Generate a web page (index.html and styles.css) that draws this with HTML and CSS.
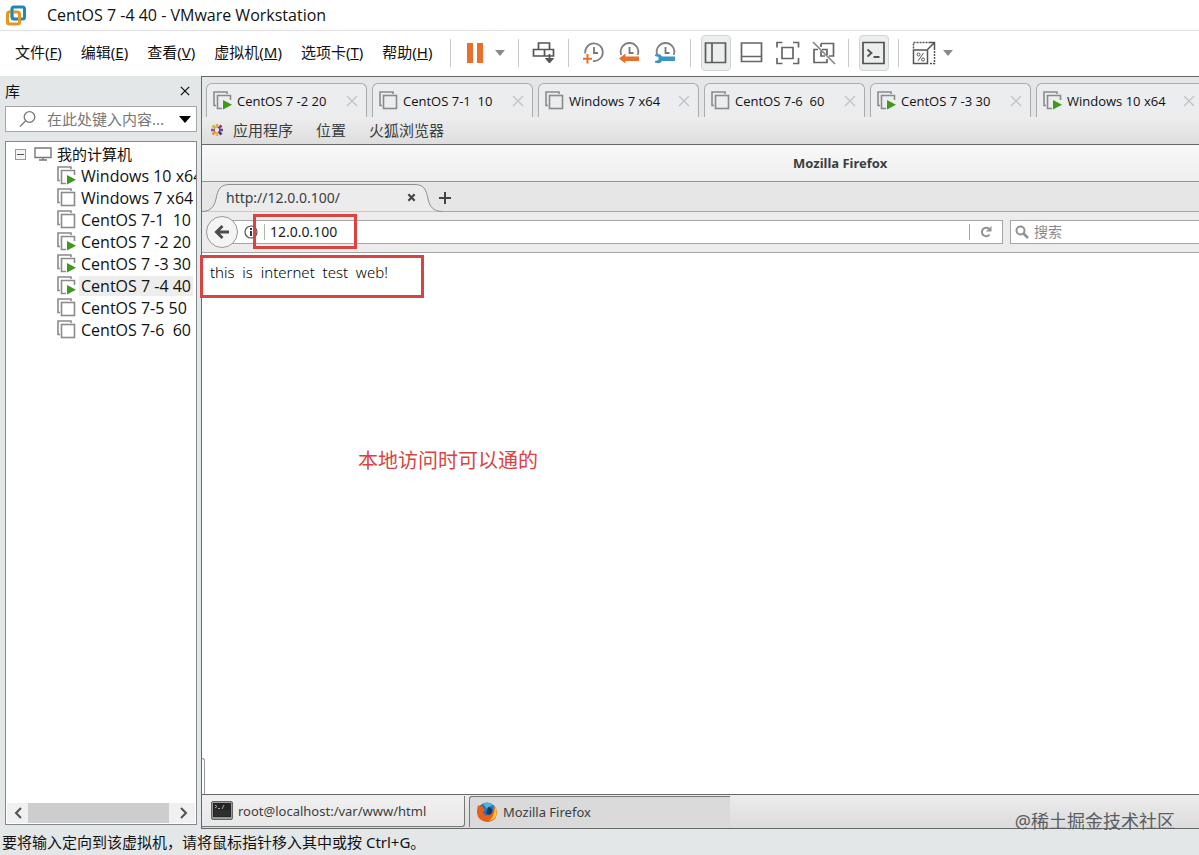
FILE: index.html
```html
<!DOCTYPE html>
<html lang="zh-CN">
<head>
<meta charset="utf-8">
<title>CentOS 7 -4 40 - VMware Workstation</title>
<link rel="stylesheet" href="styles.css">
</head>
<body>
<svg class="defs" aria-hidden="true">
  <symbol id="vm-off" viewBox="0 0 20 20">
    <path d="M3 14.5H1V1H14V3" fill="none" stroke="#8b8b8b" stroke-width="1.600"/>
    <rect x="4.500" y="4.500" width="13" height="13" fill="none" stroke="#8b8b8b" stroke-width="1.600"/>
  </symbol>
  <symbol id="vm-on" viewBox="0 0 20 20">
    <path d="M3 14.5H1V1H14V3" fill="none" stroke="#8b8b8b" stroke-width="1.600"/>
    <path d="M9 17.500H4.500V4.500H17.500V9" fill="none" stroke="#8b8b8b" stroke-width="1.600"/>
    <path d="M10 9L19 13.700L10 18.500Z" fill="#3f9a1c"/>
  </symbol>
  <symbol id="cross" viewBox="0 0 12 12">
    <path d="M1 1L11 11M11 1L1 11" fill="none" stroke="currentColor" stroke-width="1.500"/>
  </symbol>
  <symbol id="clock" viewBox="0 0 24 24">
    <path d="M3.300 12.500A8.800 8.800 0 1 1 11 20" fill="none" stroke="#808080" stroke-width="1.800"/>
    <path d="M12 6V12H16" fill="none" stroke="#777" stroke-width="1.800"/>
  </symbol>
  <symbol id="clock-top" viewBox="0 0 24 24">
    <path d="M3.300 14A8.800 8.800 0 1 1 19.700 14" fill="none" stroke="#808080" stroke-width="1.800"/>
    <path d="M11.500 6V12H15.500" fill="none" stroke="#777" stroke-width="1.800"/>
  </symbol>
</svg>

<header class="titlebar">
  <svg class="logo" viewBox="0 0 22 22" aria-hidden="true">
    <rect x="7" y="3" width="12.500" height="12" rx="2" fill="none" stroke="#1b8ab8" stroke-width="3"/>
    <rect x="2.500" y="8" width="12" height="12" rx="2" fill="none" stroke="#e6951f" stroke-width="3"/>
    <path d="M7 5V13Q7 15 9 15H12" fill="none" stroke="#1b8ab8" stroke-width="2.600"/>
  </svg>
  <h1 class="window-title">CentOS 7 -4 40 - VMware Workstation</h1>
</header>

<div class="menubar">
  <nav class="menus">
    <button class="menu" type="button">文件(<u>F</u>)</button>
    <button class="menu" type="button">编辑(<u>E</u>)</button>
    <button class="menu" type="button">查看(<u>V</u>)</button>
    <button class="menu" type="button">虚拟机(<u>M</u>)</button>
    <button class="menu" type="button">选项卡(<u>T</u>)</button>
    <button class="menu" type="button">帮助(<u>H</u>)</button>
  </nav>
  <div class="toolbar">
    <span class="sep"></span>
    <button class="tool" type="button" aria-label="挂起"><svg viewBox="0 0 24 24"><path d="M3 2h6v20H3zM13 2h6v20h-6z" fill="#e8702a"/></svg></button>
    <button class="caret" type="button" aria-label="电源选项"><svg viewBox="0 0 10 6"><path d="M0 0h10L5 6z" fill="#8a8a8a"/></svg></button>
    <span class="sep"></span>
    <button class="tool" type="button" aria-label="发送按键"><svg viewBox="0 0 24 24" fill="none" stroke="#555" stroke-width="1.700"><path d="M6.500 8.500V2H17.500V8.500M1.500 8.500H21.500V15H1.500ZM12.500 8.500V15M17.500 13V21"/><path d="M13.500 17.500H21.500L17.500 22Z" fill="#555" stroke-width="1"/></svg></button>
    <span class="sep"></span>
    <button class="tool" type="button" aria-label="拍摄快照"><svg viewBox="0 0 24 24"><use href="#clock"/><path d="M5.500 13V22.500M1 17.700H10" stroke="#e8702a" stroke-width="2"/></svg></button>
    <button class="tool" type="button" aria-label="恢复快照"><svg viewBox="0 0 24 24"><use href="#clock-top"/><path d="M1 17.500L7.500 12.500V15.500H21V20H7.500V22.500Z" fill="#e8702a"/></svg></button>
    <button class="tool" type="button" aria-label="管理快照"><svg viewBox="0 0 24 24"><use href="#clock-top"/><path d="M1 13.500Q6 12 8 15.500H21V20H8Q6 23.500 1 21.500V20L4.500 19V16L1 15Z" fill="#3b94c4"/></svg></button>
    <span class="sep"></span>
    <button class="tool pressed" type="button" aria-label="显示库"><svg viewBox="0 0 24 24" fill="none" stroke="#5a5d5d" stroke-width="1.700"><path d="M1.500 2H21.500V21.500H1.500ZM8 2V21.500"/></svg></button>
    <button class="tool" type="button" aria-label="缩略图栏"><svg viewBox="0 0 24 24" fill="none" stroke="#666" stroke-width="1.700"><path d="M1.500 2H21.500V20.500H1.500ZM1.500 15.500H21.500"/></svg></button>
    <button class="tool" type="button" aria-label="全屏"><svg viewBox="0 0 24 24" fill="none" stroke="#666" stroke-width="1.700"><path d="M1 6.500V1.500H6.500M17 1.500H22.500V6.500M22.500 17V22.500H17M6.500 22.500H1V17M6 6.500H17V17.500H6Z"/></svg></button>
    <button class="tool" type="button" aria-label="Unity"><svg viewBox="0 0 24 24" fill="none" stroke="#666" stroke-width="1.700"><path d="M9 2.500H21.500V15H17M6 8.500H2V21.500H15V18M10 8.500H15V14M9 2.500V6M9 10V15H13"/><path d="M1 1L23 23" stroke="#888"/></svg></button>
    <span class="sep"></span>
    <button class="tool pressed" type="button" aria-label="控制台视图"><svg viewBox="0 0 24 24" fill="none" stroke="#4f5252" stroke-width="1.700"><path d="M1 1.500H22V22.500H1Z"/><path d="M5.500 8.500L9.500 12L5.500 15.500M11.500 16H17.500" stroke-width="1.800"/></svg></button>
    <span class="sep"></span>
    <button class="tool" type="button" aria-label="缩放"><svg viewBox="0 0 24 24" fill="none" stroke="#555" stroke-width="1.500"><path d="M1.500 9H15.500V22.500H1.500Z"/><path d="M1.500 7.500V1.500H17M22.500 7V22.500H17" stroke-dasharray="2 1"/><path d="M15.500 8.500L22 2M17 1.500H22.500V7"/><path d="M11.500 12L6 20" stroke-width="1"/><circle cx="6.500" cy="13.500" r="1.500" stroke-width="1"/><circle cx="11" cy="18.500" r="1.500" stroke-width="1"/></svg></button>
    <button class="caret" type="button" aria-label="缩放选项"><svg viewBox="0 0 10 6"><path d="M0 0h10L5 6z" fill="#8a8a8a"/></svg></button>
  </div>
</div>

<main class="workspace">
  <aside class="library">
    <div class="library-head">
      <h2 class="library-title">库</h2>
      <button class="library-close" type="button" aria-label="关闭库"><svg viewBox="0 0 12 12"><use href="#cross"/></svg></button>
    </div>
    <div class="library-search">
      <svg class="lens" viewBox="0 0 18 18" fill="none" stroke="#777" stroke-width="1.300" aria-hidden="true"><circle cx="10.500" cy="7" r="5.300"/><path d="M6.500 11L1 16.500"/></svg>
      <input class="library-input" type="text" placeholder="在此处键入内容..." aria-label="搜索库">
      <button class="library-drop" type="button" aria-label="搜索选项"><svg viewBox="0 0 12 7"><path d="M0 0h12L6 7z"/></svg></button>
    </div>
    <div class="tree-box">
      <div class="tree-root">
        <button class="expander" type="button" aria-label="折叠"></button>
        <svg class="monitor" viewBox="0 0 18 14" fill="none" stroke="#777" stroke-width="1.400" aria-hidden="true"><path d="M1 1H17V10.500H1ZM9 10.500V13M5 13H13"/></svg>
        <span>我的计算机</span>
      </div>
      <ul class="tree">
        <li class="vm"><svg class="vm-icon"><use href="#vm-on"/></svg><span class="vm-name">Windows 10 x64</span></li>
        <li class="vm"><svg class="vm-icon"><use href="#vm-off"/></svg><span class="vm-name">Windows 7 x64</span></li>
        <li class="vm"><svg class="vm-icon"><use href="#vm-off"/></svg><span class="vm-name">CentOS 7-1  10</span></li>
        <li class="vm"><svg class="vm-icon"><use href="#vm-on"/></svg><span class="vm-name">CentOS 7 -2 20</span></li>
        <li class="vm"><svg class="vm-icon"><use href="#vm-on"/></svg><span class="vm-name">CentOS 7 -3 30</span></li>
        <li class="vm"><svg class="vm-icon"><use href="#vm-on"/></svg><span class="vm-name selected">CentOS 7 -4 40</span></li>
        <li class="vm"><svg class="vm-icon"><use href="#vm-off"/></svg><span class="vm-name">CentOS 7-5 50</span></li>
        <li class="vm"><svg class="vm-icon"><use href="#vm-off"/></svg><span class="vm-name">CentOS 7-6  60</span></li>
      </ul>
      <div class="hscroll">
        <button class="hscroll-btn" type="button" aria-label="向左滚动"><svg viewBox="0 0 8 12"><path d="M7 1L2 6L7 11"/></svg></button>
        <span class="hscroll-thumb"></span>
        <button class="hscroll-btn" type="button" aria-label="向右滚动"><svg viewBox="0 0 8 12"><path d="M1 1L6 6L1 11"/></svg></button>
      </div>
    </div>
  </aside>

  <section class="console">
    <div class="vm-tabs">
      <div class="vm-tab"><svg class="vm-icon"><use href="#vm-on"/></svg><span class="vm-tab-name">CentOS 7 -2 20</span><button class="tab-close" type="button" aria-label="关闭"><svg viewBox="0 0 12 12"><use href="#cross"/></svg></button></div>
      <div class="vm-tab"><svg class="vm-icon"><use href="#vm-off"/></svg><span class="vm-tab-name">CentOS 7-1  10</span><button class="tab-close" type="button" aria-label="关闭"><svg viewBox="0 0 12 12"><use href="#cross"/></svg></button></div>
      <div class="vm-tab"><svg class="vm-icon"><use href="#vm-off"/></svg><span class="vm-tab-name">Windows 7 x64</span><button class="tab-close" type="button" aria-label="关闭"><svg viewBox="0 0 12 12"><use href="#cross"/></svg></button></div>
      <div class="vm-tab"><svg class="vm-icon"><use href="#vm-off"/></svg><span class="vm-tab-name">CentOS 7-6  60</span><button class="tab-close" type="button" aria-label="关闭"><svg viewBox="0 0 12 12"><use href="#cross"/></svg></button></div>
      <div class="vm-tab"><svg class="vm-icon"><use href="#vm-on"/></svg><span class="vm-tab-name">CentOS 7 -3 30</span><button class="tab-close" type="button" aria-label="关闭"><svg viewBox="0 0 12 12"><use href="#cross"/></svg></button></div>
      <div class="vm-tab wide"><svg class="vm-icon"><use href="#vm-on"/></svg><span class="vm-tab-name">Windows 10 x64</span><button class="tab-close" type="button" aria-label="关闭"><svg viewBox="0 0 12 12"><use href="#cross"/></svg></button></div>
    </div>

    <nav class="gnome-bar">
      <button class="gnome-item" type="button">
        <svg class="centos" viewBox="0 0 14 14" aria-hidden="true"><g stroke-width="2.600" fill="none"><path d="M7 5V1" stroke="#e8a93a"/><path d="M8.500 5.500L11.500 2.500" stroke="#8d3b87"/><path d="M9 7H13" stroke="#5d4a8c"/><path d="M8.500 8.500L11.500 11.500" stroke="#4a3f7c"/><path d="M7 9V13" stroke="#e3b83c"/><path d="M5.500 8.500L2.500 11.500" stroke="#e8923a"/><path d="M5 7H1" stroke="#a14f97"/><path d="M5.500 5.500L2.500 2.500" stroke="#b7bf4a"/></g></svg>
        <span>应用程序</span>
      </button>
      <button class="gnome-item" type="button">位置</button>
      <button class="gnome-item" type="button">火狐浏览器</button>
    </nav>

    <div class="ff-title"><span class="ff-title-text">Mozilla Firefox</span></div>

    <div class="ff-tabs">
      <div class="ff-tab">
        <svg class="ff-tab-shape" viewBox="0 0 240 30" aria-hidden="true"><path d="M0 29.500C9 29 12 25 14 17C16 7 18 2.500 28 2.500H212C222 2.500 224 7 226 17C228 25 231 29 240 29.500" fill="#ececec" stroke="#8f8f8f"/></svg>
        <span class="ff-tab-name">http://12.0.0.100/</span>
        <button class="ff-tab-close" type="button" aria-label="关闭标签页"><svg viewBox="0 0 10 10"><path d="M1.500 1.500L8.500 8.500M8.500 1.500L1.500 8.500" stroke="#444" stroke-width="2.400"/></svg></button>
      </div>
      <button class="ff-new" type="button" aria-label="新建标签页"><svg viewBox="0 0 12 12"><path d="M6 0V12M0 6H12" stroke="#444" stroke-width="2"/></svg></button>
    </div>

    <div class="ff-nav">
      <button class="back" type="button" aria-label="后退"><svg viewBox="0 0 16 16" fill="none" stroke="#4a4d4d" stroke-width="3"><path d="M8.500 2L2.500 8L8.500 14M3 8H15"/></svg></button>
      <div class="url-box">
        <svg class="info" viewBox="0 0 14 14" aria-hidden="true"><circle cx="7" cy="7" r="6" fill="none" stroke="#555" stroke-width="1.200"/><path d="M7 6V11M7 3V5" stroke="#333" stroke-width="2"/></svg>
        <input class="url" type="text" value="12.0.0.100" aria-label="地址">
        <button class="reload" type="button" aria-label="刷新"><svg viewBox="0 0 12 12"><path d="M9.500 8.500A4.200 4.200 0 1 1 9 3" fill="none" stroke="#929292" stroke-width="2"/><path d="M11.500 0V5.500H6Z" fill="#929292"/></svg></button>
      </div>
      <label class="search-box">
        <svg class="search-lens" viewBox="0 0 14 14" fill="none" stroke="#929292" aria-hidden="true"><circle cx="5.500" cy="5.500" r="4" stroke-width="2"/><path d="M8.500 8.500L13 13" stroke-width="2.600"/></svg>
        <input class="search" type="text" placeholder="搜索" aria-label="搜索">
      </label>
      <div class="mark mark-url"></div>
    </div>

    <div class="page">
      <p class="page-text">this  is  internet  test  web!</p>
      <div class="mark mark-text"></div>
      <p class="note">本地访问时可以通的</p>
      <span class="corner"></span>
    </div>

    <div class="taskbar">
      <button class="task" type="button">
        <svg class="task-icon" viewBox="0 0 22 20" aria-hidden="true"><rect x=".5" y=".5" width="21" height="18" rx="1.500" fill="#9a9a9a" stroke="#666"/><rect x="2" y="2" width="18" height="14" fill="#242626"/><path d="M4 4L6 5.500L4 7M7 7.500H9M11 8L13 4" fill="none" stroke="#ccc" stroke-width=".8"/><path d="M3 10H19M3 12H19M3 14H19" stroke="#444" stroke-width=".7"/></svg>
        <span>root@localhost:/var/www/html</span>
      </button>
      <button class="task active" type="button">
        <svg class="task-icon" viewBox="0 0 22 22" aria-hidden="true"><circle cx="11" cy="11" r="9.500" fill="#1f78bd"/><path d="M7 3Q12 0 17 4Q13 5 11 8Z" fill="#4bb6e4"/><path d="M12 6Q18 7 16 13Q13 15 10 12Z" fill="#123a68"/><path d="M2 4Q4 6 7 5Q6 7 9 8L8 10Q6 11 8 13Q11 16 15 13Q18 10 17 4Q22 8 21 13Q19 21 11 21Q2 20 1 12Q1 7 2 4Z" fill="#e5601c"/><path d="M19 6Q22 10 20 15Q18 19 13 20Q18 16 19 6Z" fill="#f8c53a"/></svg>
        <span>Mozilla Firefox</span>
      </button>
    </div>
  </section>
</main>

<footer class="status">要将输入定向到该虚拟机，请将鼠标指针移入其中或按 Ctrl+G。</footer>
<div class="watermark">@稀土掘金技术社区</div>
</body>
</html>
```

FILE: styles.css
```css
* { box-sizing: border-box; }

body {
  margin: 0;
  height: 100vh;
  display: flex;
  flex-direction: column;
  overflow: hidden;
  position: relative;
  background: #e4e7e8;
  color: #111;
  font: 15px/20px "Noto Sans", "Noto Sans CJK SC", sans-serif;
}

h1, h2, p, ul { margin: 0; padding: 0; font-weight: 400; font-size: inherit; }
ul { list-style: none; }
svg { display: block; flex: none; }

button {
  border: 0;
  padding: 0;
  background: none;
  color: inherit;
  font: inherit;
  display: flex;
  align-items: center;
  justify-content: center;
  white-space: nowrap;
}

input {
  border: 0;
  padding: 0;
  outline: 0;
  min-width: 0;
  background: none;
  color: inherit;
  font: inherit;
}

.defs { position: absolute; width: 0; height: 0; }

.titlebar {
  display: flex;
  align-items: center;
  gap: 20px;
  height: 31px;
  padding-left: 5px;
  background: #fff;
  border-bottom: 1px solid #e2e2e2;
}
.logo { width: 22px; height: 22px; }
.window-title { font: 16px/20px "Open Sans", "Noto Sans", sans-serif; }

.menubar { display: flex; align-items: center; height: 45px; padding-bottom: 2px; background: #fff; }
.menus { display: flex; gap: 19px; padding: 0 15px 2px 15px; }
.toolbar { display: flex; align-items: center; gap: 6px; }
.tool { width: 30px; height: 36px; border-radius: 4px; }
.tool svg { width: 24px; height: 24px; }
.tool.pressed { background: #eceded; border: 1px solid #d2d4d4; }
.caret { width: 18px; height: 30px; margin-left: -6px; }
.caret svg { width: 10px; height: 6px; }
.sep { width: 1px; height: 28px; margin: 0 4px 0 3px; background: #c9c9c9; }

.workspace { flex: 1; display: flex; min-height: 0; }

.library { width: 201px; flex: none; display: flex; flex-direction: column; padding: 0 4px 4px 5px; }
.library-head { display: flex; justify-content: space-between; align-items: center; height: 30px; padding-right: 7px; }
.library-close svg { width: 10px; height: 10px; color: #111; }
.library-search {
  display: flex;
  align-items: center;
  height: 26px;
  padding: 0 5px 0 13px;
  background: #fff;
  border: 1px solid #a5a5a5;
}
.lens { width: 18px; height: 18px; }
.library-input { flex: 1; margin-left: 10px; }
.library-input::placeholder { color: #777; opacity: 1; }
.library-drop svg { width: 12px; height: 7px; }

.tree-box {
  flex: 1;
  display: flex;
  flex-direction: column;
  margin-top: 9px;
  padding: 1px;
  overflow: hidden;
  background: #fff;
  border: 1px solid #85888c;
}
.tree-root { display: flex; align-items: center; height: 22px; padding-left: 8px; }
.expander {
  width: 11px;
  height: 11px;
  border: 1px solid #999;
  background: linear-gradient(#555, #555) center / 7px 1px no-repeat #f4f4f4;
}
.monitor { width: 18px; height: 14px; margin: 0 5px 0 8px; }
.tree { flex: 1; }
.vm { display: flex; align-items: center; height: 22px; padding-left: 50px; }
.vm-icon { width: 20px; height: 20px; }
.vm-name { margin-left: 2px; padding: 0 2px; white-space: pre; font: 16px/20px "Open Sans", "Noto Sans", sans-serif; }
.vm-name.selected { background: #ededed; }

.hscroll { display: flex; height: 20px; background: #f0f0f0; }
.hscroll-btn { width: 21px; }
.hscroll-btn svg { width: 8px; height: 12px; fill: none; stroke: #505050; stroke-width: 2; }
.hscroll-thumb { flex: 1; background: #cdcdcd; }
.hscroll-btn:last-child { width: 26px; padding-left: 4px; }

.console {
  flex: 1;
  min-width: 0;
  display: flex;
  flex-direction: column;
  border: solid #66696b;
  border-width: 1px 0 1px 1px;
  background: #fff;
  color: #3b3e3f;
  font-size: 14px;
}

.vm-tabs { display: flex; gap: 5px; height: 40px; padding: 6px 0 0 4px; background: #e4e6e7; }
.vm-tab {
  display: flex;
  align-items: center;
  flex: none;
  width: 161px;
  padding: 0 8px 0 6px;
  color: #111;
  background: #ebedee;
  border: 1px solid #a9acad;
  border-bottom: 0;
  border-radius: 6px 6px 0 0;
}
.vm-tab.wide { width: 168px; }
.vm-tab-name { flex: 1; margin-left: 4px; font: 13px/20px "Open Sans", "Noto Sans", sans-serif; white-space: pre; }
.tab-close svg { width: 12px; height: 12px; color: #c4c6c7; }

.gnome-bar {
  display: flex;
  gap: 23px;
  height: 28px;
  padding: 0 0 2px 8px;
  background: linear-gradient(#ededed, #dedede);
  border-bottom: 1px solid #66696b;
  font-size: 15px;
}
.gnome-item { gap: 9px; }
.centos { width: 14px; height: 14px; }

.ff-title { height: 37px; overflow: hidden; background: linear-gradient(#f8f8f8, #efefef); border-bottom: 1px solid #919394; }
.ff-title-text {
  display: block;
  width: 128%;
  text-align: center;
  font: 700 13px/36px "Noto Sans", sans-serif;
}

.ff-tabs { display: flex; height: 30px; background: #e6e6e6; border-bottom: 1px solid #a5a5a5; }
.ff-tab { position: relative; display: flex; align-items: center; width: 228px; padding: 2px 14px 0 24px; }
.ff-tab-shape { position: absolute; left: 0; top: 0; width: 240px; height: 30px; }
.ff-tab-name { position: relative; flex: 1; }
.ff-tab-close { position: relative; }
.ff-tab-close svg { width: 9px; height: 9px; }
.ff-new { margin: 2px 0 0 9px; }
.ff-new svg { width: 12px; height: 12px; }

.ff-nav {
  position: relative;
  display: flex;
  align-items: center;
  height: 41px;
  padding-left: 4px;
  background: #ececec;
  border-bottom: 1px solid #a5a5a5;
}
.back {
  position: relative;
  z-index: 1;
  width: 32px;
  height: 32px;
  flex: none;
  background: #f4f4f4;
  border: 1px solid #999;
  border-radius: 50%;
}
.back svg { width: 16px; height: 16px; }
.url-box {
  flex: 783;
  min-width: 0;
  display: flex;
  align-items: center;
  height: 24px;
  margin-left: -16px;
  padding-left: 21px;
  background: #fff;
  border: 1px solid #a5a5a5;
}
.info { width: 14px; height: 14px; }
.url { flex: 1; height: 16px; margin-left: 6px; padding-left: 5px; border-left: 1px solid #a9b9a9; color: #222; font-size: 14px; }
.reload { width: 33px; height: 16px; border-left: 1px solid #a5a5a5; }
.reload svg { width: 12px; height: 12px; }
.search-box {
  flex: 190;
  min-width: 0;
  display: flex;
  align-items: center;
  gap: 5px;
  height: 24px;
  margin-left: 7px;
  padding-left: 4px;
  background: #fff;
  border: 1px solid #a5a5a5;
  border-right: 0;
}
.search-lens { width: 14px; height: 14px; }
.search { flex: 1; }
.search::placeholder { color: #888; opacity: 1; }

.page { position: relative; flex: 1; padding: 9px 8px; }
.page-text { font-size: 15px; font-weight: 300; line-height: 20px; color: #000; white-space: pre; }
.mark { position: absolute; z-index: 2; border: 3px solid #d94442; }
.mark-url { left: 51px; top: 2px; width: 104px; height: 35px; }
.mark-text { left: -2px; top: 2px; width: 224px; height: 43px; }
.note { position: absolute; left: 156px; top: 193px; color: #d94442; font-size: 20px; line-height: 30px; }
.corner { position: absolute; left: 0; bottom: 0; width: 3px; height: 36px; border: solid #999; border-width: 1px 1px 0 0; border-radius: 0 3px 0 0; }

.taskbar { display: flex; gap: 4px; height: 34px; padding: 1px 0; border-top: 1px solid #66696b; background: linear-gradient(#ececec, #dcdcdc); }
.task {
  width: 263px;
  justify-content: flex-start;
  gap: 5px;
  padding-left: 9px;
  font-size: 13px;
  background: linear-gradient(#f0f0f0, #e8e8e8);
  border: solid #777;
  border-width: 0 1px 1px 0;
  border-radius: 0 0 3px 0;
}
.task.active { width: 261px; padding-left: 6px; background: #dadada; border-width: 1px 0 0 1px; border-radius: 3px 0 0 0; }
.task-icon { width: 22px; height: 22px; }

.status { height: 26px; padding-left: 2px; line-height: 26px; white-space: nowrap; }
.watermark { position: absolute; right: 24px; bottom: 21px; font-size: 18px; line-height: 26px; color: #5a5d5f; }
```
